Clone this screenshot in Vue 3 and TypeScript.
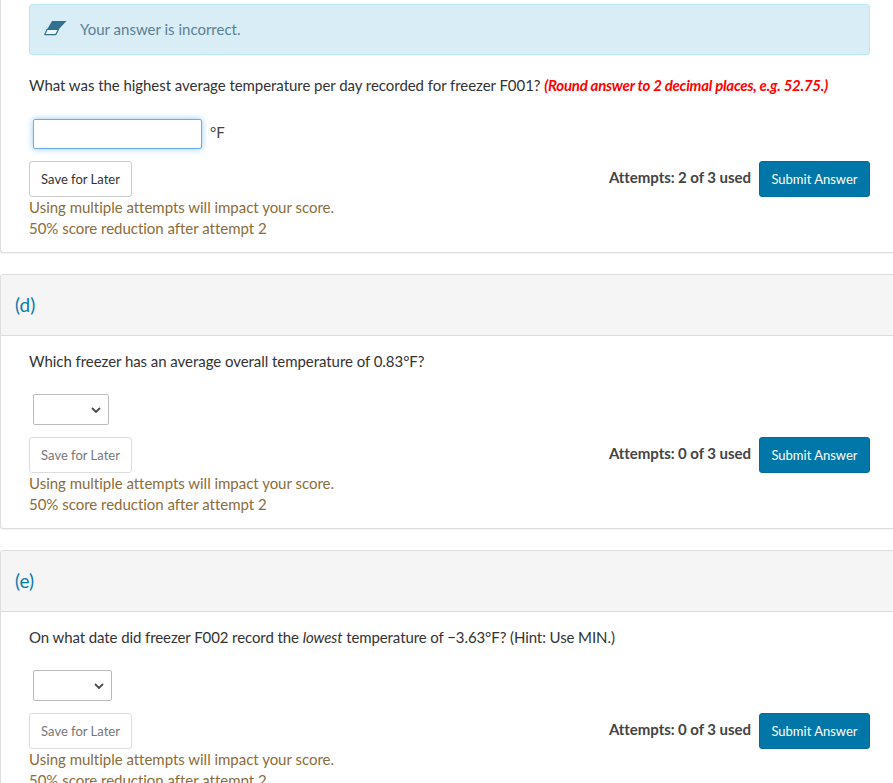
<template>
  <div class="page">
    <!-- part (c), scrolled so its header is out of view -->
    <section class="part part-top">
      <div class="part-body">
        <div class="alert-info">
          <svg class="eraser" viewBox="0 0 23 16" width="23" height="16">
            <path d="M3 9.5H14.5L11.7 14.6H0.8Z" fill="#eef7fb" stroke="#31708f" stroke-width="1.2" stroke-linejoin="round" />
            <path d="M8 1H22.5L14.5 9.5H3Z" fill="#31708f" />
          </svg>
          <span class="alert-text">Your answer is incorrect.</span>
        </div>
        <p class="question">
          What was the highest average temperature per day recorded for freezer F001?
          <em class="round-note">(Round answer to 2 decimal places, e.g. 52.75.)</em>
        </p>
        <div class="answer-row">
          <input class="answer-input" type="text" />
          <span class="unit">°F</span>
        </div>
        <div class="action-row">
          <button class="btn-save">Save for Later</button>
          <div class="action-right">
            <span class="attempts">Attempts: 2 of 3 used</span>
            <button class="btn-submit">Submit Answer</button>
          </div>
        </div>
        <div class="score-note">
          Using multiple attempts will impact your score.<br />
          50% score reduction after attempt 2
        </div>
      </div>
    </section>

    <section class="part">
      <header class="part-head">(d)</header>
      <div class="part-body">
        <p class="question">Which freezer has an average overall temperature of 0.83°F?</p>
        <div class="answer-row">
          <div class="fake-select select-d">
            <svg viewBox="0 0 10 6" width="10" height="6"><path d="M1 1L5 5L9 1" fill="none" stroke="#4a4a4a" stroke-width="1.8" /></svg>
          </div>
        </div>
        <div class="action-row">
          <button class="btn-save disabled">Save for Later</button>
          <div class="action-right">
            <span class="attempts">Attempts: 0 of 3 used</span>
            <button class="btn-submit">Submit Answer</button>
          </div>
        </div>
        <div class="score-note">
          Using multiple attempts will impact your score.<br />
          50% score reduction after attempt 2
        </div>
      </div>
    </section>

    <section class="part">
      <header class="part-head">(e)</header>
      <div class="part-body">
        <p class="question question-tight">On what date did freezer F002 record the <i>lowest</i> temperature of −3.63°F? (Hint: Use MIN.)</p>
        <div class="answer-row">
          <div class="fake-select select-e">
            <svg viewBox="0 0 10 6" width="10" height="6"><path d="M1 1L5 5L9 1" fill="none" stroke="#4a4a4a" stroke-width="1.8" /></svg>
          </div>
        </div>
        <div class="action-row">
          <button class="btn-save disabled">Save for Later</button>
          <div class="action-right">
            <span class="attempts">Attempts: 0 of 3 used</span>
            <button class="btn-submit">Submit Answer</button>
          </div>
        </div>
        <div class="score-note">
          Using multiple attempts will impact your score.<br />
          50% score reduction after attempt 2
        </div>
      </div>
    </section>
  </div>
</template>

<script setup lang="ts">
</script>

<style>
html,
body {
  margin: 0;
  height: 100%;
  overflow: hidden;
  background: #fff;
}
</style>

<style scoped>
.page {
  height: 783px;
  overflow: hidden;
  font-family: Lato, "Liberation Sans", sans-serif;
  font-size: 15px;
  color: #333;
}

.part {
  border: 1px solid #ddd;
  border-right: 0;
  border-radius: 3px 0 0 3px;
  margin-bottom: 21px;
  box-shadow: 0 1px 1px rgba(0, 0, 0, 0.05);
}

.part-top {
  border-top: 0;
  border-radius: 0 0 0 3px;
}

.part-top .part-body {
  padding-top: 4px;
}

.part-top .question {
  margin-bottom: 23px;
}

.part-top .answer-row {
  margin-bottom: 11px;
}

.part-head {
  height: 61px;
  box-sizing: border-box;
  padding: 17px 14px 0;
  background: #f5f5f5;
  border-bottom: 1px solid #ddd;
  color: #0a7aad;
  font-size: 19px;
  line-height: 26px;
}

.part-body {
  padding: 14px 23px 13px 28px;
}

.alert-info {
  display: flex;
  align-items: center;
  height: 51px;
  box-sizing: border-box;
  margin-bottom: 19px;
  padding-left: 14px;
  background: #d9edf7;
  border: 1px solid #bce8f1;
  border-radius: 3px;
  color: #5b7f94;
  font-size: 15px;
}

.alert-text {
  margin-top: -2px;
}

.eraser {
  margin-right: 13px;
  margin-top: -3px;
}

.question {
  margin: 0 0 22px;
  line-height: 22px;
  letter-spacing: -0.05px;
}

.question-tight {
  letter-spacing: -0.09px;
}

.round-note {
  color: #f00;
  font-weight: 700;
  letter-spacing: -0.24px;
}

.answer-row {
  display: flex;
  align-items: flex-start;
  height: 31px;
  margin-bottom: 12px;
  padding-left: 4px;
}

.answer-input {
  width: 169px;
  height: 30px;
  box-sizing: border-box;
  padding: 0 6px;
  border: 1px solid #66afe9;
  border-radius: 2px;
  outline: 0;
  box-shadow: 0 0 6px rgba(102, 175, 233, 0.7);
}

.unit {
  margin-left: 8px;
  line-height: 26px;
  color: #444;
}

.fake-select {
  display: flex;
  align-items: center;
  justify-content: flex-end;
  height: 31px;
  box-sizing: border-box;
  padding-right: 7px;
  border: 1px solid #bbb;
  border-radius: 2px;
}

.select-d {
  width: 76px;
}

.select-e {
  width: 79px;
}

.action-row {
  display: flex;
  justify-content: space-between;
  align-items: center;
}

.action-right {
  display: flex;
  align-items: center;
  gap: 8px;
}

.btn-save,
.btn-submit {
  height: 36px;
  box-sizing: border-box;
  border-radius: 3px;
  font-family: inherit;
  font-size: 13px;
  padding: 0 11px;
}

.btn-save {
  width: 103px;
  background: #fff;
  border: 1px solid #ccc;
  color: #333;
}

.btn-save.disabled {
  border-color: #ddd;
  color: #777;
}

.btn-submit {
  width: 111px;
  background: #0077a8;
  border: 1px solid #006d99;
  color: #fff;
}

.attempts {
  font-size: 15px;
  font-weight: 700;
  letter-spacing: -0.05px;
  color: #444;
  margin-top: -4px;
}

.score-note {
  color: #8a6d3b;
  line-height: 21px;
  letter-spacing: -0.02px;
}
</style>
